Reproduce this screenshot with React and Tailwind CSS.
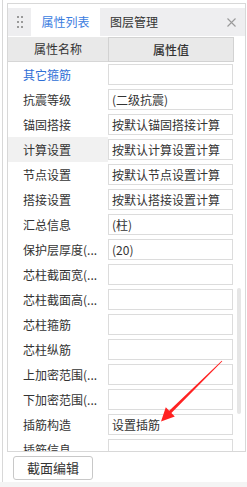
const ROWS = [
  { label: '其它箍筋', value: '', blue: true },
  { label: '抗震等级', value: '(二级抗震)' },
  { label: '锚固搭接', value: '按默认锚固搭接计算' },
  { label: '计算设置', value: '按默认计算设置计算', active: true },
  { label: '节点设置', value: '按默认节点设置计算' },
  { label: '搭接设置', value: '按默认搭接设置计算' },
  { label: '汇总信息', value: '(柱)' },
  { label: '保护层厚度(...', value: '(20)' },
  { label: '芯柱截面宽(...', value: '' },
  { label: '芯柱截面高(...', value: '' },
  { label: '芯柱箍筋', value: '' },
  { label: '芯柱纵筋', value: '' },
  { label: '上加密范围(...', value: '' },
  { label: '下加密范围(...', value: '' },
  { label: '插筋构造', value: '设置插筋' },
  { label: '插筋信息', value: '' },
]

function DragHandle() {
  return (
    <div className="grid grid-cols-2 gap-x-[2px] gap-y-[3px]">
      {[0, 1, 2, 3, 4, 5].map(i => (
        <span key={i} className="block w-[2px] h-[2px] bg-[#9a9a9a]" />
      ))}
    </div>
  )
}

export default function App() {
  return (
    <div
      className="relative w-[247px] h-[487px] bg-white flex flex-col text-[12px] text-[#333]"
      style={{ fontFamily: '"Noto Sans CJK SC", "Noto Sans", sans-serif' }}
    >
      <div className="ml-[2px] flex-1 border-l border-[#d8d8d8] pl-[4px] flex flex-col">
        {/* panel */}
        <div className="relative mt-[3px] w-[239px] h-[449px] border border-[#d8d8d8] pt-[4px] flex flex-col overflow-hidden">
          {/* tabs */}
          <div className="h-[28px] flex items-stretch bg-[#eeeef0] shrink-0">
            <div className="w-[23px] flex items-center justify-center">
              <DragHandle />
            </div>
            <div className="w-[69px] bg-white flex items-center justify-center text-[#3b7ddf]">属性列表</div>
            <div className="pl-[10px] flex items-center text-[#333]">图层管理</div>
            <div className="ml-auto pr-[9px] flex items-center">
              <svg width="9" height="9" viewBox="0 0 9 9">
                <path d="M0.5 0.5 L8.5 8.5 M8.5 0.5 L0.5 8.5" stroke="#9a9a9a" strokeWidth="1.1" />
              </svg>
            </div>
          </div>

          {/* header */}
          <div className="mt-[1px] h-[25px] flex shrink-0">
            <div className="w-[100px] bg-[#e9e9e9] border-b border-[#d6d6d6] flex items-center justify-center">属性名称</div>
            <div className="w-[126px] bg-[#e9e9e9] border border-[#d2d2d2] flex items-center justify-center font-medium">属性值</div>
          </div>

          {/* rows */}
          <div className="flex-1 overflow-hidden">
            {ROWS.map(row => (
              <div key={row.label} className="h-[25px] flex">
                <div
                  className={`w-[100px] pl-[15px] flex items-center whitespace-nowrap overflow-hidden ${
                    row.active ? 'bg-[#f1f1f1]' : ''
                  } ${row.blue ? 'text-[#2f6fd6]' : ''}`}
                >
                  {row.label}
                </div>
                <div className="w-[126px] flex items-center">
                  <div className="w-[125px] h-[21px] border border-[#dcdcdc] bg-white pl-[3px] flex items-center whitespace-nowrap overflow-hidden">
                    {row.value}
                  </div>
                </div>
              </div>
            ))}
          </div>

          {/* scrollbar thumb */}
          <div className="absolute left-[229px] top-[284px] w-[4px] h-[126px] rounded-full bg-[#e6e6e6]" />
        </div>

        {/* bottom button */}
        <div className="pt-[4px] pl-[6px]">
          <button className="w-[80px] h-[24px] border border-[#c8c8c8] rounded-[3px] bg-white text-[13px] text-[#333] flex items-center justify-center">
            截面编辑
          </button>
        </div>
      </div>
      <div className="h-[5px] bg-[#f4f4f4] shrink-0" />

      {/* red arrow annotation */}
      <svg className="absolute left-0 top-0 pointer-events-none" width="247" height="487" viewBox="0 0 247 487">
        <polygon
          points="222.3,361.3 171.4,413 174.8,416.5 161,421.5 165.8,407.3 169.2,410.8 221.7,360.7"
          fill="#ff2222"
        />
      </svg>
    </div>
  )
}
